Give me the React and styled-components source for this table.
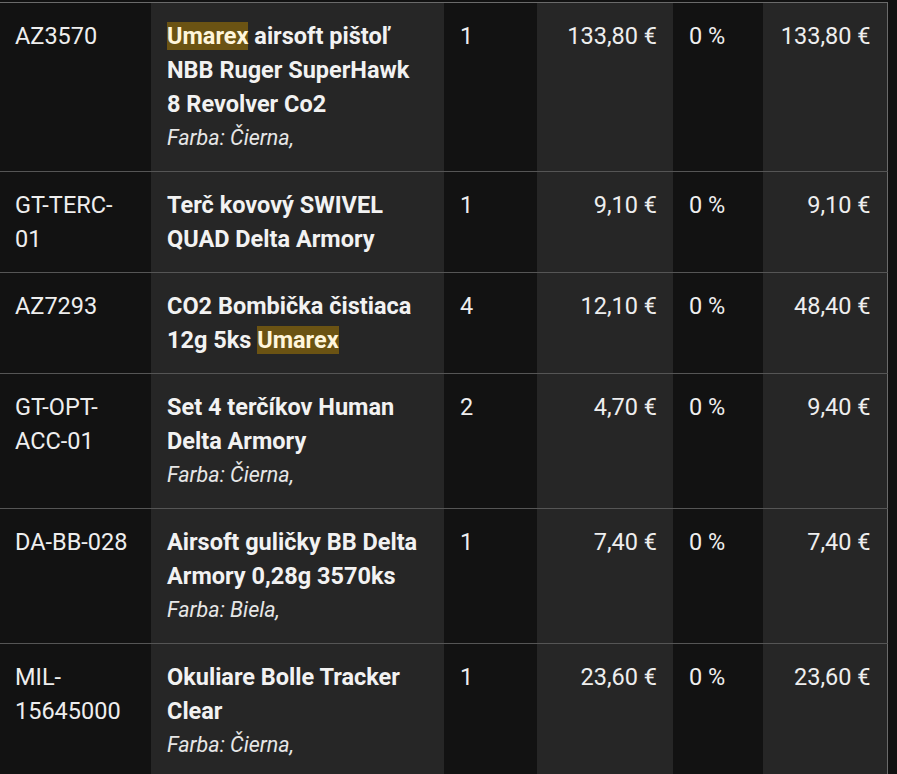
import styled, { createGlobalStyle } from "styled-components";

const GlobalStyle = createGlobalStyle`
  html, body {
    margin: 0;
    padding: 0;
    background: #111111;
  }
  body {
    font-family: Roboto, "Noto Sans", "Liberation Sans", sans-serif;
    color: #eeeeee;
  }
`;

const items = [
  {
    code: "AZ3570",
    name: [{ mark: "Umarex" }, " airsoft pištoľ NBB Ruger SuperHawk 8 Revolver Co2"],
    variant: "Farba: Čierna,",
    qty: 1,
    price: "133,80 €",
    discount: "0 %",
    total: "133,80 €",
  },
  {
    code: "GT-TERC-01",
    name: ["Terč kovový SWIVEL QUAD Delta Armory"],
    qty: 1,
    price: "9,10 €",
    discount: "0 %",
    total: "9,10 €",
  },
  {
    code: "AZ7293",
    name: ["CO2 Bombička čistiaca 12g 5ks ", { mark: "Umarex" }],
    qty: 4,
    price: "12,10 €",
    discount: "0 %",
    total: "48,40 €",
  },
  {
    code: "GT-OPT-ACC-01",
    name: ["Set 4 terčíkov Human Delta Armory"],
    variant: "Farba: Čierna,",
    qty: 2,
    price: "4,70 €",
    discount: "0 %",
    total: "9,40 €",
  },
  {
    code: "DA-BB-028",
    name: ["Airsoft guličky BB Delta Armory 0,28g 3570ks"],
    variant: "Farba: Biela,",
    qty: 1,
    price: "7,40 €",
    discount: "0 %",
    total: "7,40 €",
  },
  {
    code: "MIL-15645000",
    name: ["Okuliare Bolle Tracker Clear"],
    variant: "Farba: Čierna,",
    qty: 1,
    price: "23,60 €",
    discount: "0 %",
    total: "23,60 €",
  },
];

const Table = styled.table`
  border-collapse: collapse;
  table-layout: fixed;
  width: 887px;
  margin-top: 2px;
  border-top: 1px solid #6a6a6a;
  border-right: 1px solid #6a6a6a;
  font-size: 23.5px;
  line-height: 34px;
`;

const Row = styled.tr`
  border-bottom: 1px solid #555555;
`;

const Cell = styled.td`
  padding: 16px 16px 16px ${(p) => (p.$first ? "15px" : "16px")};
  vertical-align: top;
  background: ${(p) => (p.$shade ? "#262626" : "#121212")};
  text-align: ${(p) => (p.$right ? "right" : "left")};
  color: #eeeeee;
  word-break: break-word;
`;

const Name = styled.div`
  font-weight: 700;
  color: #f2f2f2;
`;

const Highlight = styled.mark`
  background: #6b5313;
  color: #fff6dc;
  padding: 0;
`;

const Variant = styled.div`
  font-style: italic;
  font-weight: 400;
  font-size: 21.5px;
  color: #e6e6e6;
`;

const widths = [151, 293, 93, 136, 90, 124];

export default function App() {
  return (
    <>
      <GlobalStyle />
      <Table>
        <colgroup>
          {widths.map((w, i) => (
            <col key={i} style={{ width: w }} />
          ))}
        </colgroup>
        <tbody>
          {items.map((it) => (
            <Row key={it.code}>
              <Cell $first>{it.code}</Cell>
              <Cell $shade>
                <Name>
                  {it.name.map((part, i) =>
                    typeof part === "string" ? (
                      <span key={i}>{part}</span>
                    ) : (
                      <Highlight key={i}>{part.mark}</Highlight>
                    )
                  )}
                </Name>
                {it.variant && <Variant>{it.variant}</Variant>}
              </Cell>
              <Cell>{it.qty}</Cell>
              <Cell $shade $right>{it.price}</Cell>
              <Cell>{it.discount}</Cell>
              <Cell $shade $right>{it.total}</Cell>
            </Row>
          ))}
        </tbody>
      </Table>
    </>
  );
}
